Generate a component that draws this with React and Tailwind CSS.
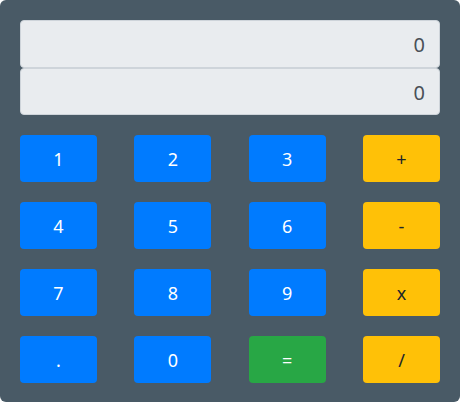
import { useState } from 'react';

const keys = [
  { label: '1', kind: 'num' },
  { label: '2', kind: 'num' },
  { label: '3', kind: 'num' },
  { label: '+', kind: 'op' },
  { label: '4', kind: 'num' },
  { label: '5', kind: 'num' },
  { label: '6', kind: 'num' },
  { label: '-', kind: 'op' },
  { label: '7', kind: 'num' },
  { label: '8', kind: 'num' },
  { label: '9', kind: 'num' },
  { label: 'x', kind: 'op' },
  { label: '.', kind: 'num' },
  { label: '0', kind: 'num' },
  { label: '=', kind: 'eq' },
  { label: '/', kind: 'op' },
];

const kindClass = {
  num: 'bg-[#007bff] text-white',
  op: 'bg-[#ffc107] text-[#212529]',
  eq: 'bg-[#28a745] text-white',
};

export default function App() {
  const [display] = useState({ top: '0', bottom: '0' });

  return (
    <div
      className="w-[460px] h-[402px] bg-[#495a66] rounded-md px-5 pt-5"
      style={{ fontFamily: '"Noto Sans", "Open Sans", sans-serif' }}
    >
      {/* Display */}
      <div className="flex flex-col">
        <div className="h-[48px] flex items-center justify-end pl-4 pr-[14px] pt-0.5 bg-[#e9ecef] border border-[#ced4da] rounded text-xl text-[#495057]">
          {display.top}
        </div>
        <div className="h-[47px] flex items-center justify-end pl-4 pr-[14px] pt-0.5 bg-[#e9ecef] border border-[#ced4da] rounded text-xl text-[#495057]">
          {display.bottom}
        </div>
      </div>

      {/* Keypad */}
      <div className="grid grid-cols-[77px_77px_77px_77px] justify-between gap-y-5 mt-5">
        {keys.map(k => (
          <button
            key={k.label}
            className={`h-[47px] rounded flex items-center justify-center text-lg ${kindClass[k.kind]}`}
          >
            {k.label}
          </button>
        ))}
      </div>
    </div>
  );
}
